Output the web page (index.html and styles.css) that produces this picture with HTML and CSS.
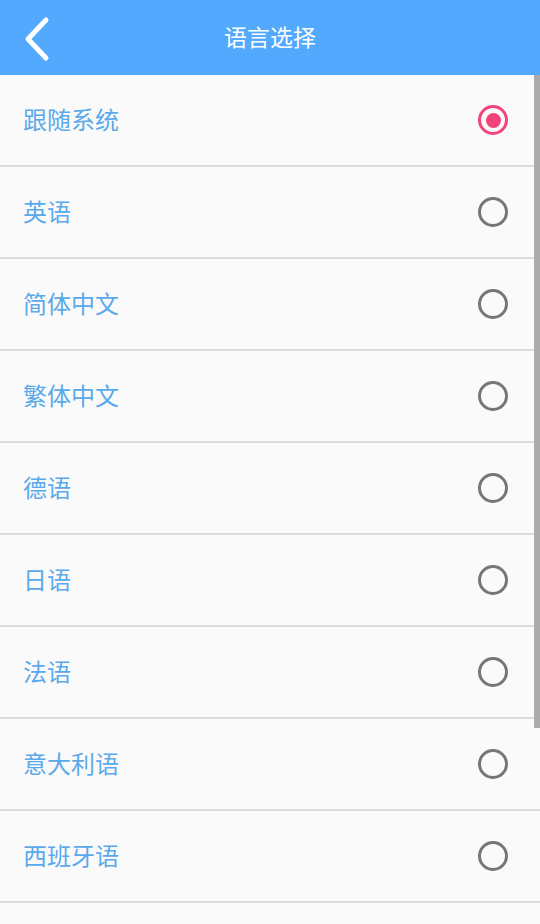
FILE: index.html
```html
<!DOCTYPE html>
<html lang="zh-CN">
<head>
<meta charset="utf-8">
<title>语言选择</title>
<link rel="stylesheet" href="styles.css">
</head>
<body>
<div class="app">
  <header class="topbar">
    <span class="back">
      <svg width="34" height="48" viewBox="0 0 34 48"><polyline points="23,6 5,25 23,44" fill="none" stroke="#fff" stroke-width="5" stroke-linecap="round" stroke-linejoin="round"/></svg>
    </span>
    <h1 class="title">语言选择</h1>
  </header>
  <ul class="list">
    <li class="row"><span class="label">跟随系统</span><span class="radio checked"></span></li>
    <li class="row"><span class="label">英语</span><span class="radio"></span></li>
    <li class="row"><span class="label">简体中文</span><span class="radio"></span></li>
    <li class="row"><span class="label">繁体中文</span><span class="radio"></span></li>
    <li class="row"><span class="label">德语</span><span class="radio"></span></li>
    <li class="row"><span class="label">日语</span><span class="radio"></span></li>
    <li class="row"><span class="label">法语</span><span class="radio"></span></li>
    <li class="row"><span class="label">意大利语</span><span class="radio"></span></li>
    <li class="row"><span class="label">西班牙语</span><span class="radio"></span></li>
  </ul>
  <div class="scrollbar"></div>
</div>
</body>
</html>
```
FILE: styles.css
```css
html, body {
  margin: 0;
  padding: 0;
}
body {
  background: #fafafa;
  font-family: "Noto Sans CJK SC", "Noto Sans", sans-serif;
}
.app {
  position: relative;
  width: 540px;
  height: 924px;
  overflow: hidden;
  background: #fafafa;
}
.topbar {
  height: 75px;
  background: #52a9fd;
  display: flex;
  align-items: center;
  justify-content: center;
  position: relative;
}
.back {
  position: absolute;
  left: 23px;
  top: 14px;
  width: 34px;
  height: 48px;
  display: block;
}
.back svg {
  display: block;
}
.title {
  margin: 0;
  font-size: 23px;
  font-weight: 400;
  color: #ffffff;
  line-height: 1;
  padding-bottom: 2px;
}
.list {
  list-style: none;
  margin: 0;
  padding: 0;
}
.row {
  height: 90px;
  border-bottom: 2px solid #dcdcdc;
  display: flex;
  align-items: center;
  justify-content: space-between;
  padding: 0 32px 0 23px;
}
.label {
  font-size: 24px;
  color: #5aa9ea;
  line-height: 1;
  padding-bottom: 3px;
}
.radio {
  width: 30px;
  height: 30px;
  box-sizing: border-box;
  border: 3px solid #767676;
  border-radius: 50%;
  display: flex;
  align-items: center;
  justify-content: center;
}
.radio.checked {
  border-color: #f2437a;
}
.radio.checked::after {
  content: "";
  width: 15px;
  height: 15px;
  border-radius: 50%;
  background: #f2437a;
}
.scrollbar {
  position: absolute;
  right: 0;
  top: 75px;
  width: 6px;
  height: 653px;
  background: #ababab;
}
```
